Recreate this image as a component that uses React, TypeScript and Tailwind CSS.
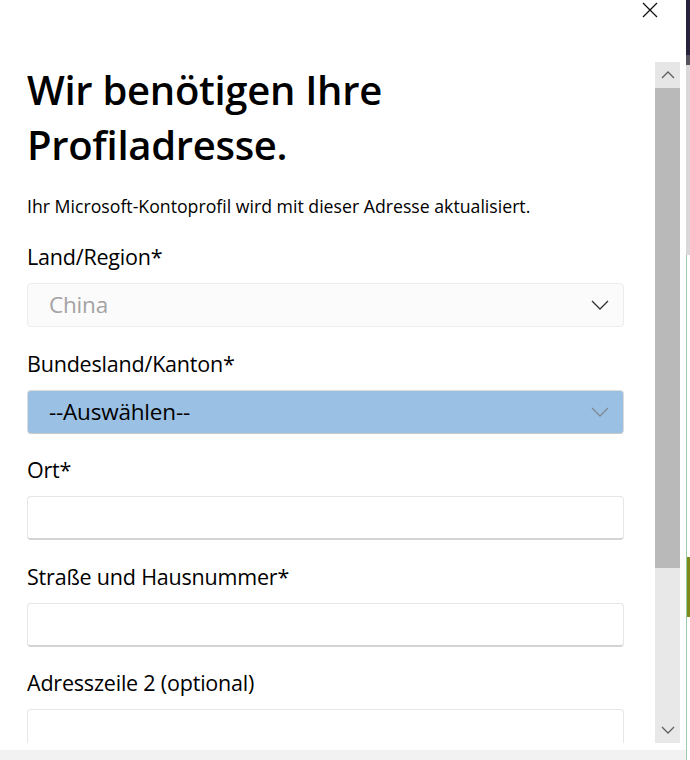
import React from "react";

const Chevron = ({ className = "" }: { className?: string }) => (
  <svg width="18" height="10" viewBox="0 0 18 10" className={className} fill="none">
    <path d="M1 1 L9 9 L17 1" stroke="currentColor" strokeWidth="1.3" />
  </svg>
);

const Label = ({ children }: { children: React.ReactNode }) => (
  <div className="text-[21.5px] leading-[28px] text-black tracking-[-0.2px]">{children}</div>
);

export default function App() {
  return (
    <div
      className="w-[690px] h-[760px] flex overflow-hidden bg-white"
      style={{ fontFamily: '"Open Sans", "Noto Sans", sans-serif' }}
    >
      <div className="w-[686px] h-[760px] flex flex-col bg-white">
        <div className="h-[62px] flex justify-end items-start pr-[28px] pt-[2px] shrink-0">
          <svg width="16" height="16" viewBox="0 0 16 16" fill="none">
            <path d="M1 1 L15 15 M15 1 L1 15" stroke="#111" strokeWidth="1.3" />
          </svg>
        </div>
        <div className="flex h-[681px] shrink-0">
          <div className="flex-1 overflow-hidden pl-[27px] pr-[31px]">
            <h1 className="mt-[0px] text-[40px] leading-[55px] font-semibold text-black tracking-[-0.3px]">
              Wir benötigen Ihre
              <br />
              Profiladresse.
            </h1>
            <p className="mt-[22px] text-[17.7px] leading-[24px] text-black">
              Ihr Microsoft-Kontoprofil wird mit dieser Adresse aktualisiert.
            </p>
            <div className="mt-[25px] flex flex-col gap-[22.5px]">
              <div className="flex flex-col gap-[12px]">
                <Label>Land/Region*</Label>
                <div className="h-[44px] rounded-[4px] border border-[#ececec] bg-[#fbfbfb] flex items-center justify-between pl-[21px] pr-[14px]">
                  <span className="text-[22.5px] text-[#a3a3a3] tracking-[-0.2px]">China</span>
                  <Chevron className="text-[#333]" />
                </div>
              </div>
              <div className="flex flex-col gap-[12px]">
                <Label>Bundesland/Kanton*</Label>
                <div className="h-[44px] rounded-[4px] border border-[#dcdcdc] border-b-[#c9c9c9] bg-[#9ac1e3] flex items-center justify-between pl-[21px] pr-[14px]">
                  <span className="text-[22.5px] text-black tracking-[-0.2px]">--Auswählen--</span>
                  <Chevron className="text-[#7d8a96]" />
                </div>
              </div>
              <div className="flex flex-col gap-[12px]">
                <Label>Ort*</Label>
                <div className="h-[44px] rounded-[4px] border border-[#e6e6e6] border-b-2 border-b-[#d4d4d4] bg-white" />
              </div>
              <div className="flex flex-col gap-[12px]">
                <Label>Straße und Hausnummer*</Label>
                <div className="h-[44px] rounded-[4px] border border-[#e6e6e6] border-b-2 border-b-[#d4d4d4] bg-white" />
              </div>
              <div className="flex flex-col gap-[12px]">
                <Label>Adresszeile 2 (optional)</Label>
                <div className="h-[44px] rounded-[4px] border border-[#e6e6e6] border-b-2 border-b-[#d4d4d4] bg-white" />
              </div>
            </div>
          </div>
          <div className="w-[25px] mr-[6px] flex flex-col bg-[#e8e8e8]">
            <div className="h-[26px] flex items-center justify-center bg-[#e6e6e6]">
              <svg width="14" height="8" viewBox="0 0 14 8" fill="none">
                <path d="M1 7 L7 1 L13 7" stroke="#606060" strokeWidth="1.3" />
              </svg>
            </div>
            <div className="h-[480px] bg-[#b9b9b9]" />
            <div className="flex-1" />
            <div className="h-[26px] flex items-center justify-center">
              <svg width="14" height="8" viewBox="0 0 14 8" fill="none">
                <path d="M1 1 L7 7 L13 1" stroke="#606060" strokeWidth="1.3" />
              </svg>
            </div>
          </div>
        </div>
        <div className="h-[7px] bg-white shrink-0" />
        <div className="flex-1 bg-[#f2f2f2]" />
      </div>
      <div className="w-[4px] h-[760px] flex flex-col">
        <div className="h-[55px] bg-[#27233a]" />
        <div className="h-[10px] bg-[#55535e]" />
        <div className="h-[190px] bg-[#d9d9d9]" />
        <div className="flex-1 flex">
          <div className="w-[1px] bg-[#9cc9a8]" />
          <div className="flex-1 flex flex-col bg-white">
            <div className="h-[302px]" />
            <div className="h-[60px] bg-[#7d8a1c]" />
            <div className="flex-1" />
          </div>
        </div>
      </div>
    </div>
  );
}
